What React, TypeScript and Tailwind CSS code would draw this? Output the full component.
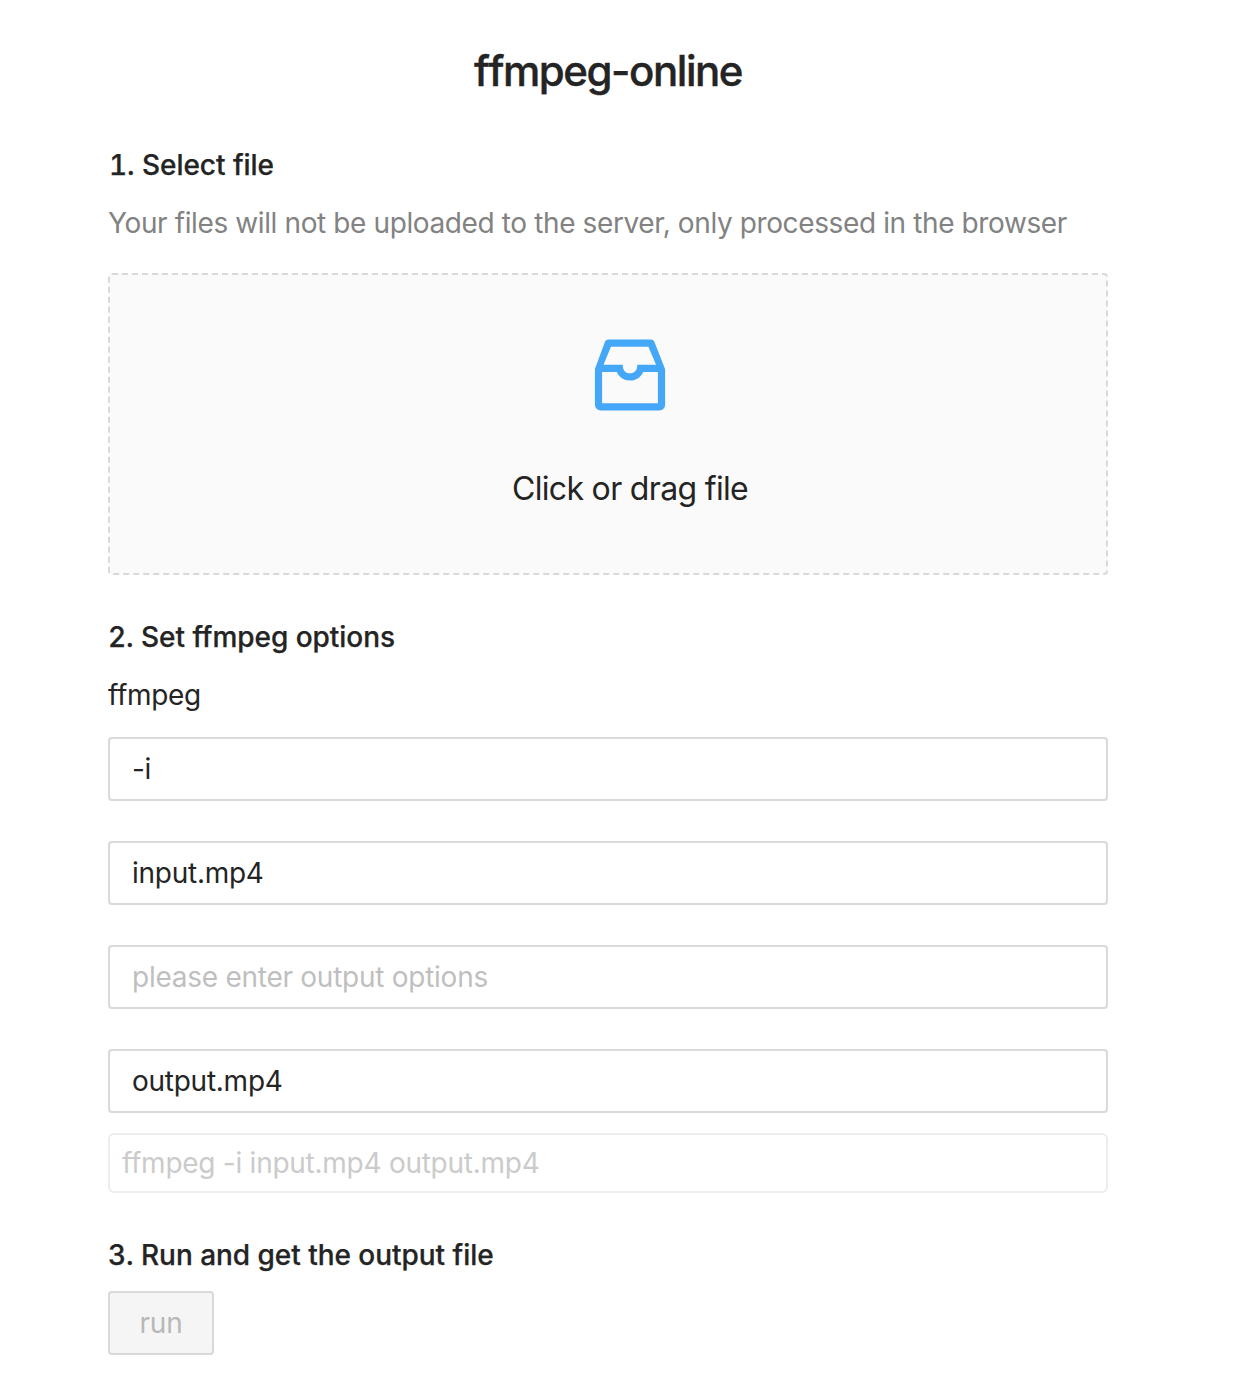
import { AiOutlineInbox } from "react-icons/ai";

const heading =
  "h-11 text-[28px] leading-[44px] font-medium tabular-nums tracking-[-0.05px] [-webkit-text-stroke:0.25px_#242424]";
const field =
  "block h-16 w-full rounded-[4px] border-2 border-[#d9d9d9] bg-white px-[22px] text-[28px] tracking-[-0.26px] outline-none placeholder:text-[#bfbfbf]";

export default function App() {
  return (
    <main className="flex h-[1390px] w-[1240px] flex-col bg-white pt-10 pr-[132px] pl-[108px] font-['Inter',sans-serif] text-[28px] leading-[44px] text-[#242424] [font-variant-ligatures:none]">
      <h1 className="h-16 text-center text-[42px] leading-[62px] font-medium tracking-[-1.45px] [-webkit-text-stroke:0.4px_#242424] [font-kerning:none]">
        ffmpeg-online
      </h1>

      <h2 className={`mt-[39px] pl-px ${heading}`}>1. Select file</h2>
      <p className="mt-[14px] h-11 whitespace-nowrap tracking-[-0.385px] text-[#828282]">
        Your files will not be uploaded to the server, only processed in the browser
      </p>
      <button
        type="button"
        className="mt-7 flex h-[302px] w-full flex-col items-center rounded-[4px] border-2 border-dashed border-[#d9d9d9] bg-[#fafafa] pt-[52px] pl-[44px]"
      >
        <AiOutlineInbox className="size-24 shrink-0 text-[#45a7f7]" />
        <span className="mt-[41px] text-[32px] leading-[50px] tracking-[-0.67px]">Click or drag file</span>
      </button>

      <h2 className={`mt-10 ${heading}`}>2. Set ffmpeg options</h2>
      <p className="mt-[14px] h-11 tracking-[-0.33px]">ffmpeg</p>
      <div className="mt-5 flex flex-col gap-10">
        <input className={field} defaultValue="-i" />
        <input className={field} defaultValue="input.mp4" />
        <input className={field} placeholder="please enter output options" />
        <input className={field} defaultValue="output.mp4" />
      </div>
      <div className="mt-5 h-[60px] rounded-[6px] border-2 border-[#ededed] px-3 leading-[56px] tracking-[-0.26px] text-[#cbcbcb]">
        ffmpeg -i input.mp4 output.mp4
      </div>

      <h2 className={`mt-10 ${heading}`}>3. Run and get the output file</h2>
      <button
        type="button"
        disabled
        className="mt-[14px] h-16 w-[106px] rounded-[4px] border-2 border-[#d9d9d9] bg-[#f5f5f5] tracking-[-0.2px] text-[#b8b8b8]"
      >
        run
      </button>
    </main>
  );
}
